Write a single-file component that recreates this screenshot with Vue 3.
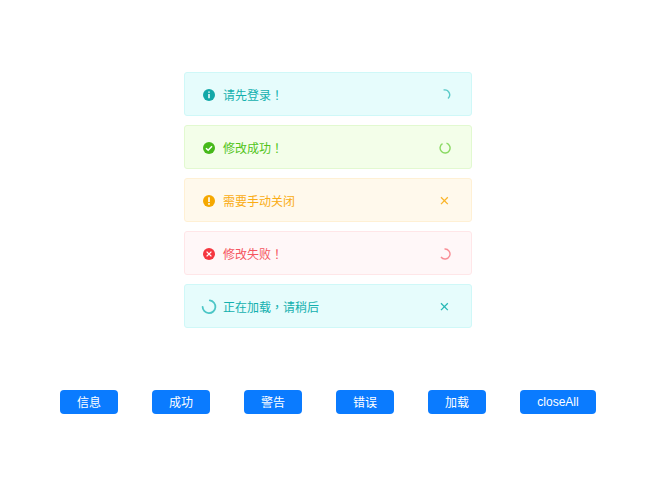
<script setup>
const messages = [
  { type: 'info', text: '请先登录！', close: 'spin1' },
  { type: 'success', text: '修改成功！', close: 'spin2' },
  { type: 'warning', text: '需要手动关闭', close: 'x' },
  { type: 'error', text: '修改失败！', close: 'spin3' },
  { type: 'loading', text: '正在加载，请稍后', close: 'x' }
]
const buttons = ['信息', '成功', '警告', '错误', '加载', 'closeAll']
</script>

<template>
  <div class="page">
    <div class="stack">
      <div v-for="m in messages" :key="m.type" class="msg" :class="m.type">
        <svg v-if="m.type === 'loading'" class="icon big" width="18" height="18" viewBox="0 0 18 18">
          <path d="M9.8 2.4A6.4 6.4 0 1 1 2.6 8.8" fill="none" stroke="#4cc6c6" stroke-width="1.8" stroke-linecap="round" />
        </svg>
        <svg v-else class="icon" width="12" height="12" viewBox="0 0 12 12">
          <circle cx="6" cy="6" r="6" class="disc" />
          <path v-if="m.type === 'info'" d="M6 2.6v1.1M6 5v4.2" stroke="#fff" stroke-width="1.5" fill="none" />
          <path v-if="m.type === 'success'" d="M3 6.2l2.2 2.1 3.8-4" stroke="#fff" stroke-width="1.5" fill="none" />
          <path v-if="m.type === 'warning'" d="M6 2.2v4.8M6 8.1v1.6" stroke="#fff" stroke-width="1.6" fill="none" />
          <path v-if="m.type === 'error'" d="M3.6 3.6l4.8 4.8M8.4 3.6l-4.8 4.8" stroke="#fff" stroke-width="1.3" fill="none" />
        </svg>
        <span class="text">{{ m.text }}</span>
        <span class="close">
          <svg v-if="m.close === 'x'" width="10" height="10" viewBox="0 0 10 10">
            <path d="M1 1.3l6.8 6.8M7.8 1.3L1 8.1" stroke="currentColor" stroke-width="1.3" fill="none" opacity=".9" />
          </svg>
          <svg v-else-if="m.close === 'spin1'" width="12" height="12" viewBox="0 0 12 12">
            <path d="M4.6 1a5 5 0 0 1 4.4 8.6" stroke="currentColor" stroke-width="1.4" fill="none" opacity=".65" />
          </svg>
          <svg v-else-if="m.close === 'spin2'" width="12" height="12" viewBox="0 0 12 12">
            <path d="M7.5 1.2A5 5 0 1 1 3.5 1.7" stroke="currentColor" stroke-width="1.4" fill="none" opacity=".65" />
          </svg>
          <svg v-else width="12" height="12" viewBox="0 0 12 12">
            <path d="M5.5 1a5 5 0 1 1-3.5 8" stroke="currentColor" stroke-width="1.4" fill="none" opacity=".65" />
          </svg>
        </span>
      </div>
    </div>
    <div class="actions">
      <button v-for="b in buttons" :key="b" type="button" class="btn">{{ b }}</button>
    </div>
  </div>
</template>

<style>
html, body { margin: 0; background: #fff; }
</style>

<style scoped>
.page {
  width: 650px;
  height: 502px;
  box-sizing: border-box;
  padding-top: 72px;
  font-family: "Noto Sans CJK TC", "Liberation Sans", sans-serif;
  overflow: hidden;
}
.stack {
  display: flex;
  flex-direction: column;
  gap: 9px;
  width: 288px;
  margin-left: 184px;
}
.msg {
  display: flex;
  align-items: center;
  height: 44px;
  box-sizing: border-box;
  padding: 1px 20px 0 18px;
  border: 1px solid;
  border-radius: 3px;
  font-size: 12px;
  line-height: 16px;
}
.icon { flex: none; }
.big { margin-left: -3px; margin-right: -3px; }
.text { margin-left: 8px; flex: 1; }
.close { display: flex; width: 12px; justify-content: center; }
.info, .loading { background: #e6fcfc; border-color: #cff8f8; color: #13b0ae; }
.info .disc { fill: #13a8a8; }
.success { background: #f3fee9; border-color: #e2f9d0; color: #52c41a; }
.success .disc { fill: #46b91a; }
.warning { background: #fff9ec; border-color: #fff0d4; color: #faad14; }
.warning .disc { fill: #f5a800; }
.error { background: #fff7f8; border-color: #ffe6e8; color: #f5555f; }
.error .disc { fill: #f5363f; }
.actions {
  display: flex;
  gap: 34px;
  margin: 62px 0 0 60px;
}
.btn {
  height: 24px;
  width: 58px;
  padding: 0 0 1px;
  border: 0;
  border-radius: 4px;
  background: #0a7bff;
  color: #fff;
  font: inherit;
  font-size: 12px;
  line-height: 16px;
}
.btn:last-child { width: 76px; font-family: "Liberation Sans", sans-serif; font-size: 12px; }
</style>
